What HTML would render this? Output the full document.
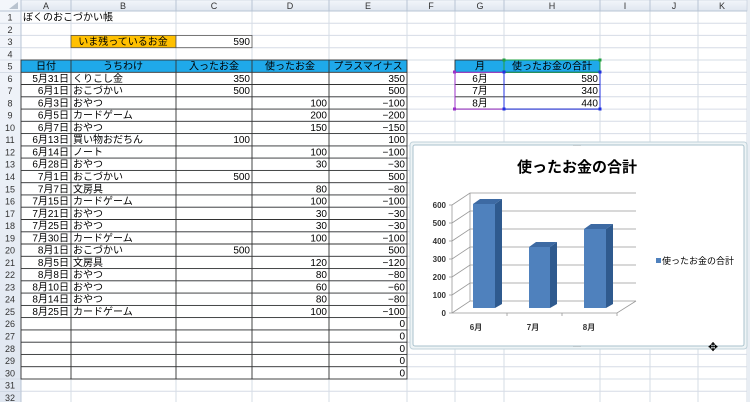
<!DOCTYPE html>
<html><head><meta charset="utf-8"><style>
body{margin:0;width:750px;height:402px;overflow:hidden;background:#fff}
svg{display:block;font-family:"Liberation Sans","Noto Sans CJK JP",sans-serif}
</style></head><body>
<svg width="750" height="402" viewBox="0 0 750 402" font-size="10" fill="#000">
<defs>
<linearGradient id="hg" x1="0" y1="0" x2="0" y2="1"><stop offset="0" stop-color="#f3f6fb"/><stop offset="1" stop-color="#dfe6f0"/></linearGradient>
</defs>
<rect width="750" height="402" fill="#fff"/>
<!-- grid horizontals -->
<g stroke="#d6dce6" stroke-width="1">
<line x1="0" x2="747" y1="23.2" y2="23.2"/><line x1="0" x2="747" y1="35.4" y2="35.4"/><line x1="0" x2="747" y1="47.7" y2="47.7"/><line x1="0" x2="747" y1="60" y2="60"/><line x1="0" x2="747" y1="72.3" y2="72.3"/><line x1="0" x2="747" y1="84.5" y2="84.5"/><line x1="0" x2="747" y1="96.8" y2="96.8"/><line x1="0" x2="747" y1="109.1" y2="109.1"/><line x1="0" x2="747" y1="121.3" y2="121.3"/><line x1="0" x2="747" y1="133.6" y2="133.6"/><line x1="0" x2="747" y1="145.9" y2="145.9"/><line x1="0" x2="747" y1="158.1" y2="158.1"/><line x1="0" x2="747" y1="170.4" y2="170.4"/><line x1="0" x2="747" y1="182.7" y2="182.7"/><line x1="0" x2="747" y1="194.9" y2="194.9"/><line x1="0" x2="747" y1="207.2" y2="207.2"/><line x1="0" x2="747" y1="219.5" y2="219.5"/><line x1="0" x2="747" y1="231.8" y2="231.8"/><line x1="0" x2="747" y1="244" y2="244"/><line x1="0" x2="747" y1="256.3" y2="256.3"/><line x1="0" x2="747" y1="268.6" y2="268.6"/><line x1="0" x2="747" y1="280.8" y2="280.8"/><line x1="0" x2="747" y1="293.1" y2="293.1"/><line x1="0" x2="747" y1="305.4" y2="305.4"/><line x1="0" x2="747" y1="317.6" y2="317.6"/><line x1="0" x2="747" y1="329.9" y2="329.9"/><line x1="0" x2="747" y1="342.2" y2="342.2"/><line x1="0" x2="747" y1="354.4" y2="354.4"/><line x1="0" x2="747" y1="366.7" y2="366.7"/><line x1="0" x2="747" y1="379" y2="379"/><line x1="0" x2="747" y1="391.3" y2="391.3"/>
<line x1="71" x2="71" y1="0" y2="402"/><line x1="176" x2="176" y1="0" y2="402"/><line x1="252" x2="252" y1="0" y2="402"/><line x1="329" x2="329" y1="0" y2="402"/><line x1="407" x2="407" y1="0" y2="402"/><line x1="455" x2="455" y1="0" y2="402"/><line x1="504" x2="504" y1="0" y2="402"/><line x1="600" x2="600" y1="0" y2="402"/><line x1="650" x2="650" y1="0" y2="402"/><line x1="698" x2="698" y1="0" y2="402"/><line x1="747" x2="747" y1="0" y2="402"/>
</g>
<rect x="747" y="0" width="3" height="402" fill="#e8edf3"/>
<!-- column header -->
<rect x="0" y="0" width="747" height="11" fill="url(#hg)" stroke="#b8c4d4" stroke-width="0.5"/>
<rect x="0" y="0" width="21" height="402" fill="url(#hg)"/>
<g stroke="#b8c4d4"><line x1="21" x2="21" y1="0" y2="402"/><line x1="0" x2="747" y1="11" y2="11"/>
<line x1="71" x2="71" y1="0" y2="11"/><line x1="176" x2="176" y1="0" y2="11"/><line x1="252" x2="252" y1="0" y2="11"/><line x1="329" x2="329" y1="0" y2="11"/><line x1="407" x2="407" y1="0" y2="11"/><line x1="455" x2="455" y1="0" y2="11"/><line x1="504" x2="504" y1="0" y2="11"/><line x1="600" x2="600" y1="0" y2="11"/><line x1="650" x2="650" y1="0" y2="11"/><line x1="698" x2="698" y1="0" y2="11"/></g>
<path d="M9 9 L18 9 L18 2 Z" fill="#b9c3cf"/>
<g fill="#333" font-size="9" text-anchor="middle">
<text x="46" y="9">A</text><text x="123" y="9">B</text><text x="214" y="9">C</text><text x="290" y="9">D</text><text x="368" y="9">E</text><text x="431" y="9">F</text><text x="480" y="9">G</text><text x="552" y="9">H</text><text x="625" y="9">I</text><text x="674" y="9">J</text><text x="722" y="9">K</text>
</g>
<g fill="#333" font-size="9" text-anchor="middle">
<text x="10" y="20.5">1</text><text x="10" y="32.8">2</text><text x="10" y="45">3</text><text x="10" y="57.3">4</text><text x="10" y="69.6">5</text><text x="10" y="81.9">6</text><text x="10" y="94.1">7</text><text x="10" y="106.4">8</text><text x="10" y="118.7">9</text><text x="10" y="130.9">10</text><text x="10" y="143.2">11</text><text x="10" y="155.5">12</text><text x="10" y="167.7">13</text><text x="10" y="180">14</text><text x="10" y="192.3">15</text><text x="10" y="204.5">16</text><text x="10" y="216.8">17</text><text x="10" y="229.1">18</text><text x="10" y="241.4">19</text><text x="10" y="253.6">20</text><text x="10" y="265.9">21</text><text x="10" y="278.2">22</text><text x="10" y="290.4">23</text><text x="10" y="302.7">24</text><text x="10" y="315">25</text><text x="10" y="327.2">26</text><text x="10" y="339.5">27</text><text x="10" y="351.8">28</text><text x="10" y="364">29</text><text x="10" y="376.3">30</text><text x="10" y="388.6">31</text><text x="10" y="400.9">32</text>
</g>
<g stroke="#c5cfdc" stroke-width="0.6"><line x1="0" x2="21" y1="23.2" y2="23.2"/><line x1="0" x2="21" y1="35.4" y2="35.4"/><line x1="0" x2="21" y1="47.7" y2="47.7"/><line x1="0" x2="21" y1="60" y2="60"/><line x1="0" x2="21" y1="72.3" y2="72.3"/><line x1="0" x2="21" y1="379" y2="379"/><line x1="0" x2="21" y1="391.3" y2="391.3"/></g>
<!-- row 1 / 3 -->
<text x="23" y="20.5">ぼくのおこづかい帳</text>
<rect x="71" y="35.4" width="105" height="12.3" fill="#ffc000" stroke="#555" stroke-width="0.8"/>
<rect x="176" y="35.4" width="76" height="12.3" fill="#fff" stroke="#555" stroke-width="0.8"/>
<text x="123" y="45" text-anchor="middle">いま残っているお金</text>
<text x="250" y="45" text-anchor="end">590</text>
<!-- header row 5 -->
<rect x="21" y="60" width="386" height="12.3" fill="#1fa9ea"/>
<rect x="455" y="60" width="145" height="12.3" fill="#1fa9ea"/>
<g text-anchor="middle"><text x="46" y="69.6">日付</text><text x="123" y="69.6">うちわけ</text><text x="214" y="69.6">入ったお金</text><text x="290" y="69.6">使ったお金</text><text x="368" y="69.6">プラスマイナス</text><text x="480" y="69.6">月</text><text x="552" y="69.6">使ったお金の合計</text></g>
<!-- table borders -->
<g stroke="#333" stroke-width="0.9" fill="none">
<rect x="21" y="60" width="386" height="319"/>
<line x1="71" x2="71" y1="60" y2="379"/><line x1="176" x2="176" y1="60" y2="379"/><line x1="252" x2="252" y1="60" y2="379"/><line x1="329" x2="329" y1="60" y2="379"/>
<line x1="21" x2="407" y1="72.3" y2="72.3"/><line x1="21" x2="407" y1="84.5" y2="84.5"/><line x1="21" x2="407" y1="96.8" y2="96.8"/><line x1="21" x2="407" y1="109.1" y2="109.1"/><line x1="21" x2="407" y1="121.3" y2="121.3"/><line x1="21" x2="407" y1="133.6" y2="133.6"/><line x1="21" x2="407" y1="145.9" y2="145.9"/><line x1="21" x2="407" y1="158.1" y2="158.1"/><line x1="21" x2="407" y1="170.4" y2="170.4"/><line x1="21" x2="407" y1="182.7" y2="182.7"/><line x1="21" x2="407" y1="194.9" y2="194.9"/><line x1="21" x2="407" y1="207.2" y2="207.2"/><line x1="21" x2="407" y1="219.5" y2="219.5"/><line x1="21" x2="407" y1="231.8" y2="231.8"/><line x1="21" x2="407" y1="244" y2="244"/><line x1="21" x2="407" y1="256.3" y2="256.3"/><line x1="21" x2="407" y1="268.6" y2="268.6"/><line x1="21" x2="407" y1="280.8" y2="280.8"/><line x1="21" x2="407" y1="293.1" y2="293.1"/><line x1="21" x2="407" y1="305.4" y2="305.4"/><line x1="21" x2="407" y1="317.6" y2="317.6"/><line x1="21" x2="407" y1="329.9" y2="329.9"/><line x1="21" x2="407" y1="342.2" y2="342.2"/><line x1="21" x2="407" y1="354.4" y2="354.4"/><line x1="21" x2="407" y1="366.7" y2="366.7"/>
<rect x="455" y="60" width="145" height="49.1"/>
<line x1="455" x2="600" y1="72.3" y2="72.3"/><line x1="455" x2="600" y1="84.5" y2="84.5"/><line x1="455" x2="600" y1="96.8" y2="96.8"/><line x1="504" x2="504" y1="60" y2="109.1"/>
</g>
<!-- selection -->
<g fill="none" stroke-width="1"><rect x="455" y="72.3" width="49" height="36.8" stroke="#9b30c8"/><rect x="504" y="72.3" width="96" height="36.8" stroke="#2030e0"/><rect x="504" y="60" width="96" height="12.3" stroke="#20a040"/></g>
<g><rect x="453" y="70.5" width="3" height="3" fill="#9b30c8"/><rect x="453" y="107.5" width="3" height="3" fill="#9b30c8"/><rect x="502.5" y="70.5" width="3" height="3" fill="#2030e0"/><rect x="598.5" y="70.5" width="3" height="3" fill="#2030e0"/><rect x="502.5" y="107.5" width="3" height="3" fill="#2030e0"/><rect x="598.5" y="107.5" width="3" height="3" fill="#2030e0"/><rect x="502.5" y="58.5" width="3" height="3" fill="#20a040"/><rect x="598.5" y="58.5" width="3" height="3" fill="#20a040"/></g>
<g text-anchor="middle"><text x="480" y="81.9">6月</text><text x="480" y="94.1">7月</text><text x="480" y="106.4">8月</text></g>
<g text-anchor="end"><text x="598" y="81.9">580</text><text x="598" y="94.1">340</text><text x="598" y="106.4">440</text></g>
<!-- data col A -->
<g text-anchor="end">
<text x="69" y="81.9">5月31日</text><text x="69" y="94.1">6月1日</text><text x="69" y="106.4">6月3日</text><text x="69" y="118.7">6月5日</text><text x="69" y="130.9">6月7日</text><text x="69" y="143.2">6月13日</text><text x="69" y="155.5">6月14日</text><text x="69" y="167.7">6月28日</text><text x="69" y="180">7月1日</text><text x="69" y="192.3">7月7日</text><text x="69" y="204.5">7月15日</text><text x="69" y="216.8">7月21日</text><text x="69" y="229.1">7月25日</text><text x="69" y="241.4">7月30日</text><text x="69" y="253.6">8月1日</text><text x="69" y="265.9">8月5日</text><text x="69" y="278.2">8月8日</text><text x="69" y="290.4">8月10日</text><text x="69" y="302.7">8月14日</text><text x="69" y="315">8月25日</text>
</g>
<g>
<text x="73" y="81.9">くりこし金</text><text x="73" y="94.1">おこづかい</text><text x="73" y="106.4">おやつ</text><text x="73" y="118.7">カードゲーム</text><text x="73" y="130.9">おやつ</text><text x="73" y="143.2">買い物おだちん</text><text x="73" y="155.5">ノート</text><text x="73" y="167.7">おやつ</text><text x="73" y="180">おこづかい</text><text x="73" y="192.3">文房具</text><text x="73" y="204.5">カードゲーム</text><text x="73" y="216.8">おやつ</text><text x="73" y="229.1">おやつ</text><text x="73" y="241.4">カードゲーム</text><text x="73" y="253.6">おこづかい</text><text x="73" y="265.9">文房具</text><text x="73" y="278.2">おやつ</text><text x="73" y="290.4">おやつ</text><text x="73" y="302.7">おやつ</text><text x="73" y="315">カードゲーム</text>
</g>
<g text-anchor="end">
<text x="250" y="81.9">350</text><text x="250" y="94.1">500</text><text x="250" y="143.2">100</text><text x="250" y="180">500</text><text x="250" y="253.6">500</text>
<text x="327" y="106.4">100</text><text x="327" y="118.7">200</text><text x="327" y="130.9">150</text><text x="327" y="155.5">100</text><text x="327" y="167.7">30</text><text x="327" y="192.3">80</text><text x="327" y="204.5">100</text><text x="327" y="216.8">30</text><text x="327" y="229.1">30</text><text x="327" y="241.4">100</text><text x="327" y="265.9">120</text><text x="327" y="278.2">80</text><text x="327" y="290.4">60</text><text x="327" y="302.7">80</text><text x="327" y="315">100</text>
<text x="405" y="81.9">350</text><text x="405" y="94.1">500</text><text x="405" y="106.4">−100</text><text x="405" y="118.7">−200</text><text x="405" y="130.9">−150</text><text x="405" y="143.2">100</text><text x="405" y="155.5">−100</text><text x="405" y="167.7">−30</text><text x="405" y="180">500</text><text x="405" y="192.3">−80</text><text x="405" y="204.5">−100</text><text x="405" y="216.8">−30</text><text x="405" y="229.1">−30</text><text x="405" y="241.4">−100</text><text x="405" y="253.6">500</text><text x="405" y="265.9">−120</text><text x="405" y="278.2">−80</text><text x="405" y="290.4">−60</text><text x="405" y="302.7">−80</text><text x="405" y="315">−100</text><text x="405" y="327.2">0</text><text x="405" y="339.5">0</text><text x="405" y="351.8">0</text><text x="405" y="364">0</text><text x="405" y="376.3">0</text>
</g>
<!-- chart -->
<rect x="410" y="142" width="337" height="207" fill="#eef4f6" stroke="#c0d2da" rx="3"/>
<rect x="413" y="145" width="331" height="201" fill="#fff" stroke="#a9c2cc" rx="2"/>
<g fill="#666" font-size="6" text-anchor="middle"><text x="577" y="147">····</text><text x="577" y="348">····</text></g>
<text x="577" y="172" text-anchor="middle" font-size="15" font-weight="bold">使ったお金の合計</text>
<g stroke="#999" stroke-width="0.8" fill="none">
<path d="M452 313 L470 301 L636 301"/><path d="M452 295 L470 283 L636 283"/><path d="M452 277 L470 265 L636 265"/><path d="M452 259 L470 247 L636 247"/><path d="M452 241 L470 229 L636 229"/><path d="M452 223 L470 211 L636 211"/><path d="M452 205 L470 193 L636 193"/>
<path d="M452 313 L617 313 L636 301"/><line x1="452" y1="205" x2="452" y2="313"/><line x1="470" y1="193" x2="470" y2="301"/>
<line x1="449" y1="313" x2="452" y2="313"/><line x1="449" y1="295" x2="452" y2="295"/><line x1="449" y1="277" x2="452" y2="277"/><line x1="449" y1="259" x2="452" y2="259"/><line x1="449" y1="241" x2="452" y2="241"/><line x1="449" y1="223" x2="452" y2="223"/><line x1="449" y1="205" x2="452" y2="205"/>
<line x1="507" y1="313" x2="507" y2="316"/><line x1="562" y1="313" x2="562" y2="316"/><line x1="617" y1="313" x2="617" y2="316"/>
</g>
<g>
<path d="M495 204 L502 199 L502 304 L495 308 Z" fill="#2f5a8e"/><path d="M473 204 L480 199 L502 199 L495 204 Z" fill="#3d6aa3"/><rect x="473" y="204" width="22" height="104" fill="#4f81bd"/>
<path d="M550 247 L557 242 L557 304 L550 308 Z" fill="#2f5a8e"/><path d="M529 247 L536 242 L557 242 L550 247 Z" fill="#3d6aa3"/><rect x="529" y="247" width="21" height="61" fill="#4f81bd"/>
<path d="M606 229 L613 224 L613 304 L606 308 Z" fill="#2f5a8e"/><path d="M584 229 L591 224 L613 224 L606 229 Z" fill="#3d6aa3"/><rect x="584" y="229" width="22" height="79" fill="#4f81bd"/>
</g>
<g font-size="8" font-weight="bold" fill="#333" text-anchor="end"><text x="446" y="316">0</text><text x="446" y="298">100</text><text x="446" y="280">200</text><text x="446" y="262">300</text><text x="446" y="244">400</text><text x="446" y="226">500</text><text x="446" y="208">600</text></g>
<g font-size="8" font-weight="bold" fill="#333" text-anchor="middle"><text x="476" y="330">6月</text><text x="533" y="330">7月</text><text x="589" y="330">8月</text></g>
<rect x="656" y="258" width="5" height="5" fill="#4f81bd"/>
<text x="662" y="264" font-size="9">使ったお金の合計</text>
<text x="713" y="351" font-size="12" text-anchor="middle">✥</text>
</svg>
</body></html>
